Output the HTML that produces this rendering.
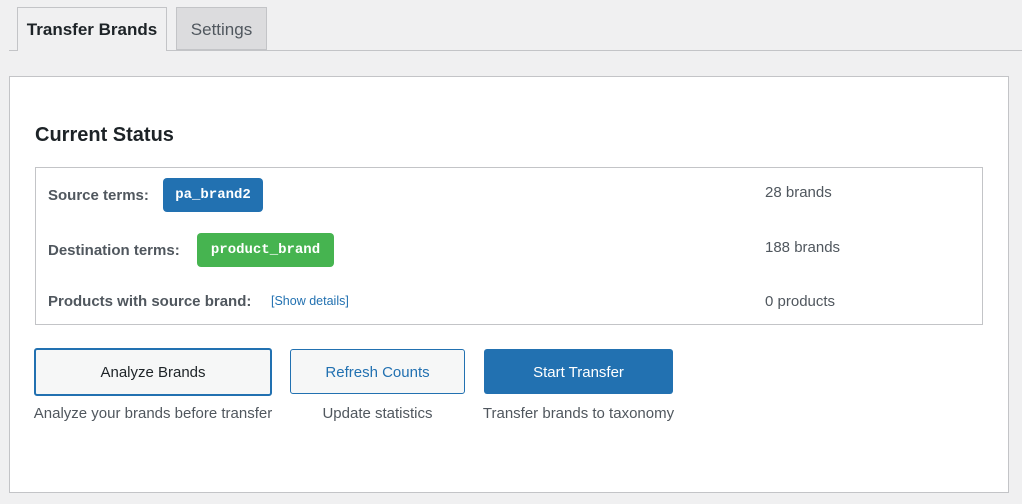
<!DOCTYPE html>
<html><head><style>
body{margin:0;width:1022px;height:504px;background:#f0f0f1;font-family:"Liberation Sans",sans-serif;position:relative;overflow:hidden;color:#3c434a}
.a{position:absolute}
.line{left:9px;right:0;top:50px;height:1px;background:#c3c4c7}
.tab{top:7px;height:43px;border:1px solid #c3c4c7;box-sizing:border-box;font-size:17px;line-height:44px;text-align:center}
.panel{left:9px;top:76px;width:1000px;height:417px;background:#fff;border:1px solid #c3c4c7;box-sizing:border-box}
.box{left:35px;top:167px;width:948px;height:158px;border:1px solid #c3c4c7;box-sizing:border-box}
.lbl{font-size:15px;font-weight:bold;color:#50575e}
.badge{border-radius:4px;color:#fff;font-family:"Liberation Mono",monospace;font-weight:bold;font-size:14px;text-align:center}
.val{left:765px;font-size:15px;color:#50575e}
.btn{box-sizing:border-box;border-radius:3px;font-size:15px;text-align:center}
.desc{font-size:15px;color:#50575e;top:405px;text-align:center}
</style></head><body>
<div class="a line"></div>
<div class="a tab" style="left:17px;width:150px;height:44px;background:#f0f0f1;border-bottom:none;color:#1d2327;font-weight:bold">Transfer Brands</div>
<div class="a tab" style="left:176px;width:91px;background:#dcdcde;color:#50575e">Settings</div>
<div class="a panel"></div>
<div class="a" style="left:35px;top:124px;font-size:20px;font-weight:bold;color:#1d2327">Current Status</div>
<div class="a box"></div>
<div class="a lbl" style="left:48px;top:187px">Source terms:</div>
<div class="a badge" style="left:163px;top:178px;width:100px;height:34px;line-height:34px;background:#2271b1">pa_brand2</div>
<div class="a lbl" style="left:48px;top:242px">Destination terms:</div>
<div class="a badge" style="left:197px;top:233px;width:137px;height:34px;line-height:34px;background:#46b450">product_brand</div>
<div class="a lbl" style="left:48px;top:293px">Products with source brand:</div>
<div class="a" style="left:271px;top:294px;font-size:12.5px;color:#2271b1">[Show details]</div>
<div class="a val" style="top:184px">28 brands</div>
<div class="a val" style="top:239px">188 brands</div>
<div class="a val" style="top:293px">0 products</div>
<div class="a btn" style="left:34px;top:348px;width:238px;height:48px;border:2px solid #2271b1;background:#f6f7f7;color:#1d2327;line-height:46px">Analyze Brands</div>
<div class="a btn" style="left:290px;top:349px;width:175px;height:45px;border:1px solid #2271b1;background:#f6f7f7;color:#2271b1;line-height:45px">Refresh Counts</div>
<div class="a btn" style="left:484px;top:349px;width:189px;height:45px;background:#2271b1;color:#fff;line-height:47px">Start Transfer</div>
<div class="a desc" style="left:24px;width:258px">Analyze your brands before transfer</div>
<div class="a desc" style="left:280px;width:195px">Update statistics</div>
<div class="a desc" style="left:466px;width:225px">Transfer brands to taxonomy</div>
</body></html>
